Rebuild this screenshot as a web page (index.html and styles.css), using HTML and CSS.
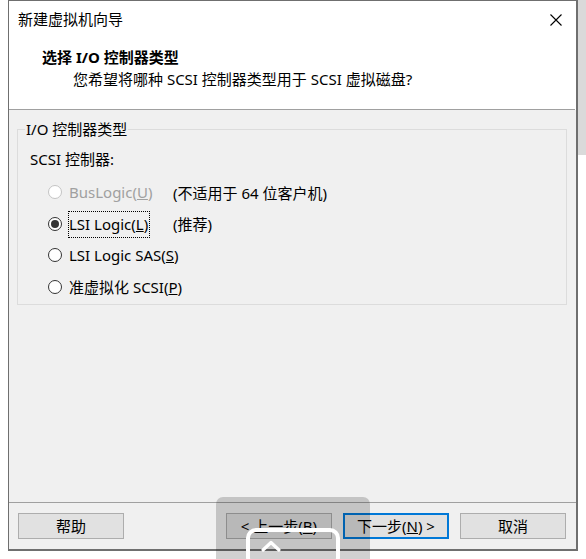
FILE: index.html
```html
<!DOCTYPE html>
<html lang="zh-CN">
<head>
  <meta charset="UTF-8">
  <title>新建虚拟机向导</title>
  <link rel="stylesheet" href="styles.css">
</head>
<body>
  <div class="desktop">
    <!-- Wizard window -->
    <div class="window">
      <div class="titlebar">
        <span class="title">新建虚拟机向导</span>
        <svg class="close" width="12" height="12" viewBox="0 0 12 12">
          <path d="M0.5 0.5 L11.5 11.5 M11.5 0.5 L0.5 11.5" stroke="#000" stroke-width="1.1" fill="none"/>
        </svg>
      </div>

      <div class="header">
        <div class="header-title">选择 I/O 控制器类型</div>
        <div class="header-sub">您希望将哪种 SCSI 控制器类型用于 SCSI 虚拟磁盘?</div>
      </div>

      <div class="content">
        <fieldset class="group">
          <legend>I/O 控制器类型</legend>
          <div class="group-label">SCSI 控制器:</div>
          <div class="options">
            <div class="option disabled">
              <span class="radio"></span>
              <span class="opt-label">BusLogic(<u>U</u>)</span>
              <span class="note">(不适用于 64 位客户机)</span>
            </div>
            <div class="option">
              <span class="radio checked"></span>
              <span class="opt-label"><span class="focus">LSI Logic(<u>L</u>)</span></span>
              <span class="note">(推荐)</span>
            </div>
            <div class="option">
              <span class="radio"></span>
              <span class="opt-label">LSI Logic SAS(<u>S</u>)</span>
            </div>
            <div class="option">
              <span class="radio"></span>
              <span class="opt-label">准虚拟化 SCSI(<u>P</u>)</span>
            </div>
          </div>
        </fieldset>
      </div>

      <div class="footer">
        <button class="btn">帮助</button>
        <div class="nav">
          <button class="btn">&lt; 上一步(<u>B</u>)</button>
          <button class="btn default">下一步(<u>N</u>) &gt;</button>
          <button class="btn">取消</button>
        </div>
      </div>
    </div>

    <!-- Strip of the window behind -->
    <div class="side">
      <div class="side-block"></div>
    </div>
  </div>

  <!-- Floating back-to-top widget -->
  <div class="float-tool">
    <div class="float-inner">
      <svg width="22" height="14" viewBox="0 0 22 14">
        <path d="M3 11 L11 3.5 L19 11" stroke="#fff" stroke-width="3.2" fill="none" stroke-linecap="round" stroke-linejoin="round"/>
      </svg>
    </div>
  </div>
</body>
</html>
```

FILE: styles.css
```css
/* Page */
body {
  margin: 0;
  background: #fff;
  font-family: "Noto Sans", "Noto Sans CJK SC", sans-serif;
  font-size: 15px;
  color: #000;
}

.desktop {
  display: flex;
  align-items: flex-start;
  padding-left: 8px;
}

/* Wizard window */
.window {
  width: 570px;
  box-sizing: border-box;
  border: 1px solid #6f6f6f;
  border-bottom-width: 2px;
  border-right-width: 2px;
  background: #fff;
}

.titlebar {
  height: 36px;
  display: flex;
  align-items: center;
  justify-content: space-between;
  padding: 0 14px 0 9px;
}

.title {
  line-height: 20px;
}

.close {
  display: block;
  margin-top: 1px;
}

.header {
  height: 73px;
  padding-top: 10px;
  box-sizing: border-box;
  border-bottom: 1px solid #a0a0a0;
  margin-right: 1px;
}

.header-title {
  font-weight: bold;
  line-height: 20px;
  padding-left: 33px;
}

.header-sub {
  line-height: 20px;
  margin-top: 2px;
  padding-left: 64px;
}

/* Body */
.content {
  height: 392px;
  box-sizing: border-box;
  background: #f0f0f0;
  padding: 9px 9px 0 8px;
}

.group {
  margin: 0;
  padding: 0 0 7px 12px;
  border: 1px solid #dcdcdc;
}

.group legend {
  margin-left: -5px;
  padding: 0 1px;
  line-height: 20px;
}

.group-label {
  line-height: 20px;
  margin-top: 10px;
}

.options {
  display: flex;
  flex-direction: column;
  gap: 11.5px;
  margin-top: 13px;
  padding-left: 18px;
}

.option {
  display: flex;
  align-items: center;
  height: 20px;
}

.radio {
  width: 14px;
  height: 14px;
  box-sizing: border-box;
  border: 1.3px solid #333;
  border-radius: 50%;
  background: #fff;
  display: flex;
  align-items: center;
  justify-content: center;
  margin-right: 7px;
}

.radio.checked::after {
  content: "";
  width: 8px;
  height: 8px;
  border-radius: 50%;
  background: #333;
}

.opt-label {
  width: 104px;
  white-space: nowrap;
}

.focus {
  outline: 1px dotted #000;
  outline-offset: 0;
  padding: 2px 1px 3px 0;
}

.option.disabled {
  color: #a0a0a0;
}

.option.disabled .radio {
  border-color: #c4c4c4;
}

.option.disabled .note {
  color: #000;
}

/* Footer buttons */
.footer {
  height: 47px;
  box-sizing: border-box;
  border-top: 1px solid #a0a0a0;
  background: #f0f0f0;
  display: flex;
  justify-content: space-between;
  padding: 10px 10px 0 9px;
}

.nav {
  display: flex;
  gap: 11px;
}

.btn {
  width: 106px;
  height: 26px;
  box-sizing: border-box;
  background: #e1e1e1;
  border: 1px solid #adadad;
  font-family: "Noto Sans", "Noto Sans CJK SC", sans-serif;
  font-size: 15px;
  color: #000;
  padding: 0;
  line-height: 22px;
}

.btn.default {
  border: 2px solid #0078d7;
}

/* Window behind, at the right edge */
.side {
  flex: 1;
}

.side-block {
  height: 155px;
  background: #dadada;
}

/* Floating widget over the page */
.float-tool {
  position: absolute;
  left: 216px;
  top: 497px;
  width: 154px;
  height: 70px;
  border-radius: 7px;
  background: rgba(0, 0, 0, 0.18);
}

.float-inner {
  position: absolute;
  left: 30px;
  top: 31px;
  width: 94px;
  height: 40px;
  box-sizing: border-box;
  border: 4px solid #fff;
  border-radius: 10px;
  padding: 7px 0 0 10px;
}

.float-inner svg {
  display: block;
}
```
